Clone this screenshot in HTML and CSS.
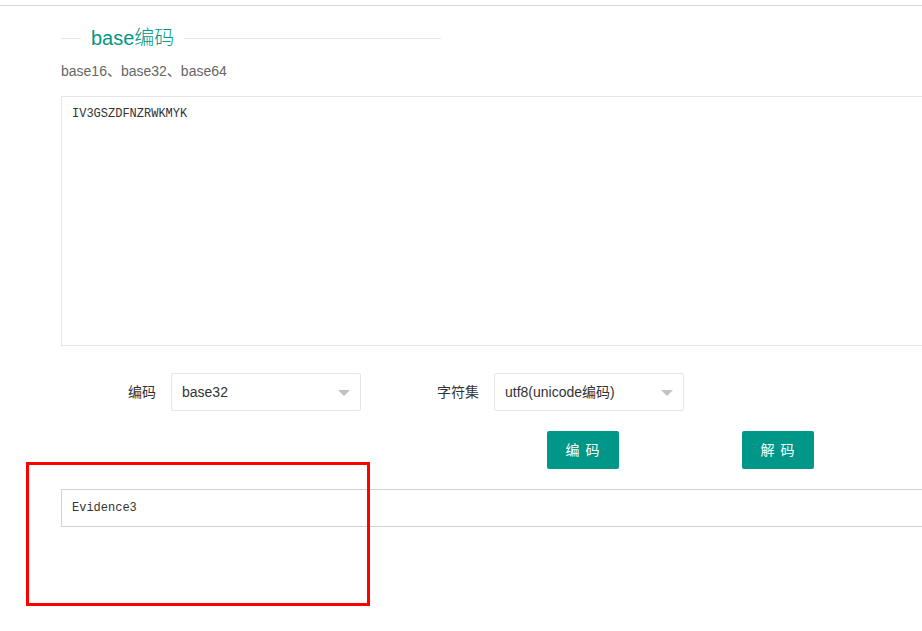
FILE: index.html
```html
<!DOCTYPE html>
<html lang="zh-CN">
<head>
<meta charset="utf-8">
<title>base编码</title>
<link rel="stylesheet" href="styles.css">
</head>
<body>
<div class="topline"></div>
<main class="page">
  <div class="field-title"><span class="title-text">base编码</span></div>
  <p class="subtitle">base16、base32、base64</p>
  <div class="textarea">IV3GSZDFNZRWKMYK</div>
  <div class="form-row">
    <label class="form-label">编码</label>
    <div class="select"><span>base32</span><i class="arrow"></i></div>
    <label class="form-label form-label-2">字符集</label>
    <div class="select"><span>utf8(unicode编码)</span><i class="arrow"></i></div>
  </div>
  <div class="btn-row">
    <button class="btn">编 码</button>
    <button class="btn">解 码</button>
  </div>
  <div class="output-wrap">
    <div class="output">Evidence3</div>
    <div class="highlight"></div>
  </div>
</main>
</body>
</html>
```
FILE: styles.css
```css
body {
  margin: 0;
  padding: 0;
  background: #fff;
  font-family: "Liberation Sans", "Noto Sans CJK SC", sans-serif;
  color: #333;
}
.topline {
  margin-top: 5px;
  height: 1px;
  background: #d6d6d6;
}
.page {
  padding-left: 61px;
  padding-bottom: 90px;
  overflow: hidden;
}
.field-title {
  display: flex;
  align-items: center;
  width: 380px;
  height: 28px;
  margin-top: 18px;
}
.field-title::before,
.field-title::after {
  content: "";
  height: 1px;
  background: #e6e6e6;
}
.field-title::before {
  width: 20px;
}
.field-title::after {
  flex: 1;
}
.title-text {
  padding: 0 10px;
  font-size: 20px;
  font-weight: 300;
  color: #009688;
  line-height: 28px;
}
.subtitle {
  margin: 9px 0 0;
  font-size: 14px;
  line-height: 20px;
  color: #666;
}
.textarea {
  margin-top: 15px;
  box-sizing: border-box;
  width: 900px;
  height: 250px;
  border: 1px solid #e6e6e6;
  padding: 9px 10px;
  font-family: "Liberation Mono", monospace;
  font-size: 12px;
  line-height: 16px;
  color: #333;
}
.form-row {
  display: flex;
  align-items: center;
  margin-top: 27px;
  height: 38px;
}
.form-label {
  box-sizing: border-box;
  width: 110px;
  padding: 9px 15px;
  text-align: right;
  font-size: 14px;
  line-height: 20px;
  color: #333;
}
.form-label-2 {
  margin-left: 23px;
}
.select {
  position: relative;
  box-sizing: border-box;
  width: 190px;
  height: 38px;
  border: 1px solid #e6e6e6;
  border-radius: 2px;
  padding-left: 10px;
  font-size: 14px;
  line-height: 36px;
  color: #333;
}
.arrow {
  position: absolute;
  right: 10px;
  top: 16px;
  width: 0;
  height: 0;
  border-left: 6px solid transparent;
  border-right: 6px solid transparent;
  border-top: 6px solid #c2c2c2;
}
.btn-row {
  display: flex;
  gap: 123px;
  margin-top: 20px;
  padding-left: 486px;
}
.btn {
  width: 72px;
  height: 38px;
  border: 0;
  border-radius: 2px;
  background: #009688;
  color: #fff;
  font-family: "Liberation Sans", "Noto Sans CJK SC", sans-serif;
  font-size: 14px;
  line-height: 36px;
  padding: 0;
  letter-spacing: 1px;
}
.output-wrap {
  position: relative;
  margin-top: 20px;
}
.output {
  box-sizing: border-box;
  width: 900px;
  height: 38px;
  border: 1px solid #d2d2d2;
  padding: 0 10px;
  font-family: "Liberation Mono", monospace;
  font-size: 12px;
  line-height: 36px;
  color: #333;
}
.highlight {
  position: absolute;
  left: -35px;
  top: -27px;
  box-sizing: border-box;
  width: 344px;
  height: 144px;
  border: 3px solid #ff0000;
}
```
